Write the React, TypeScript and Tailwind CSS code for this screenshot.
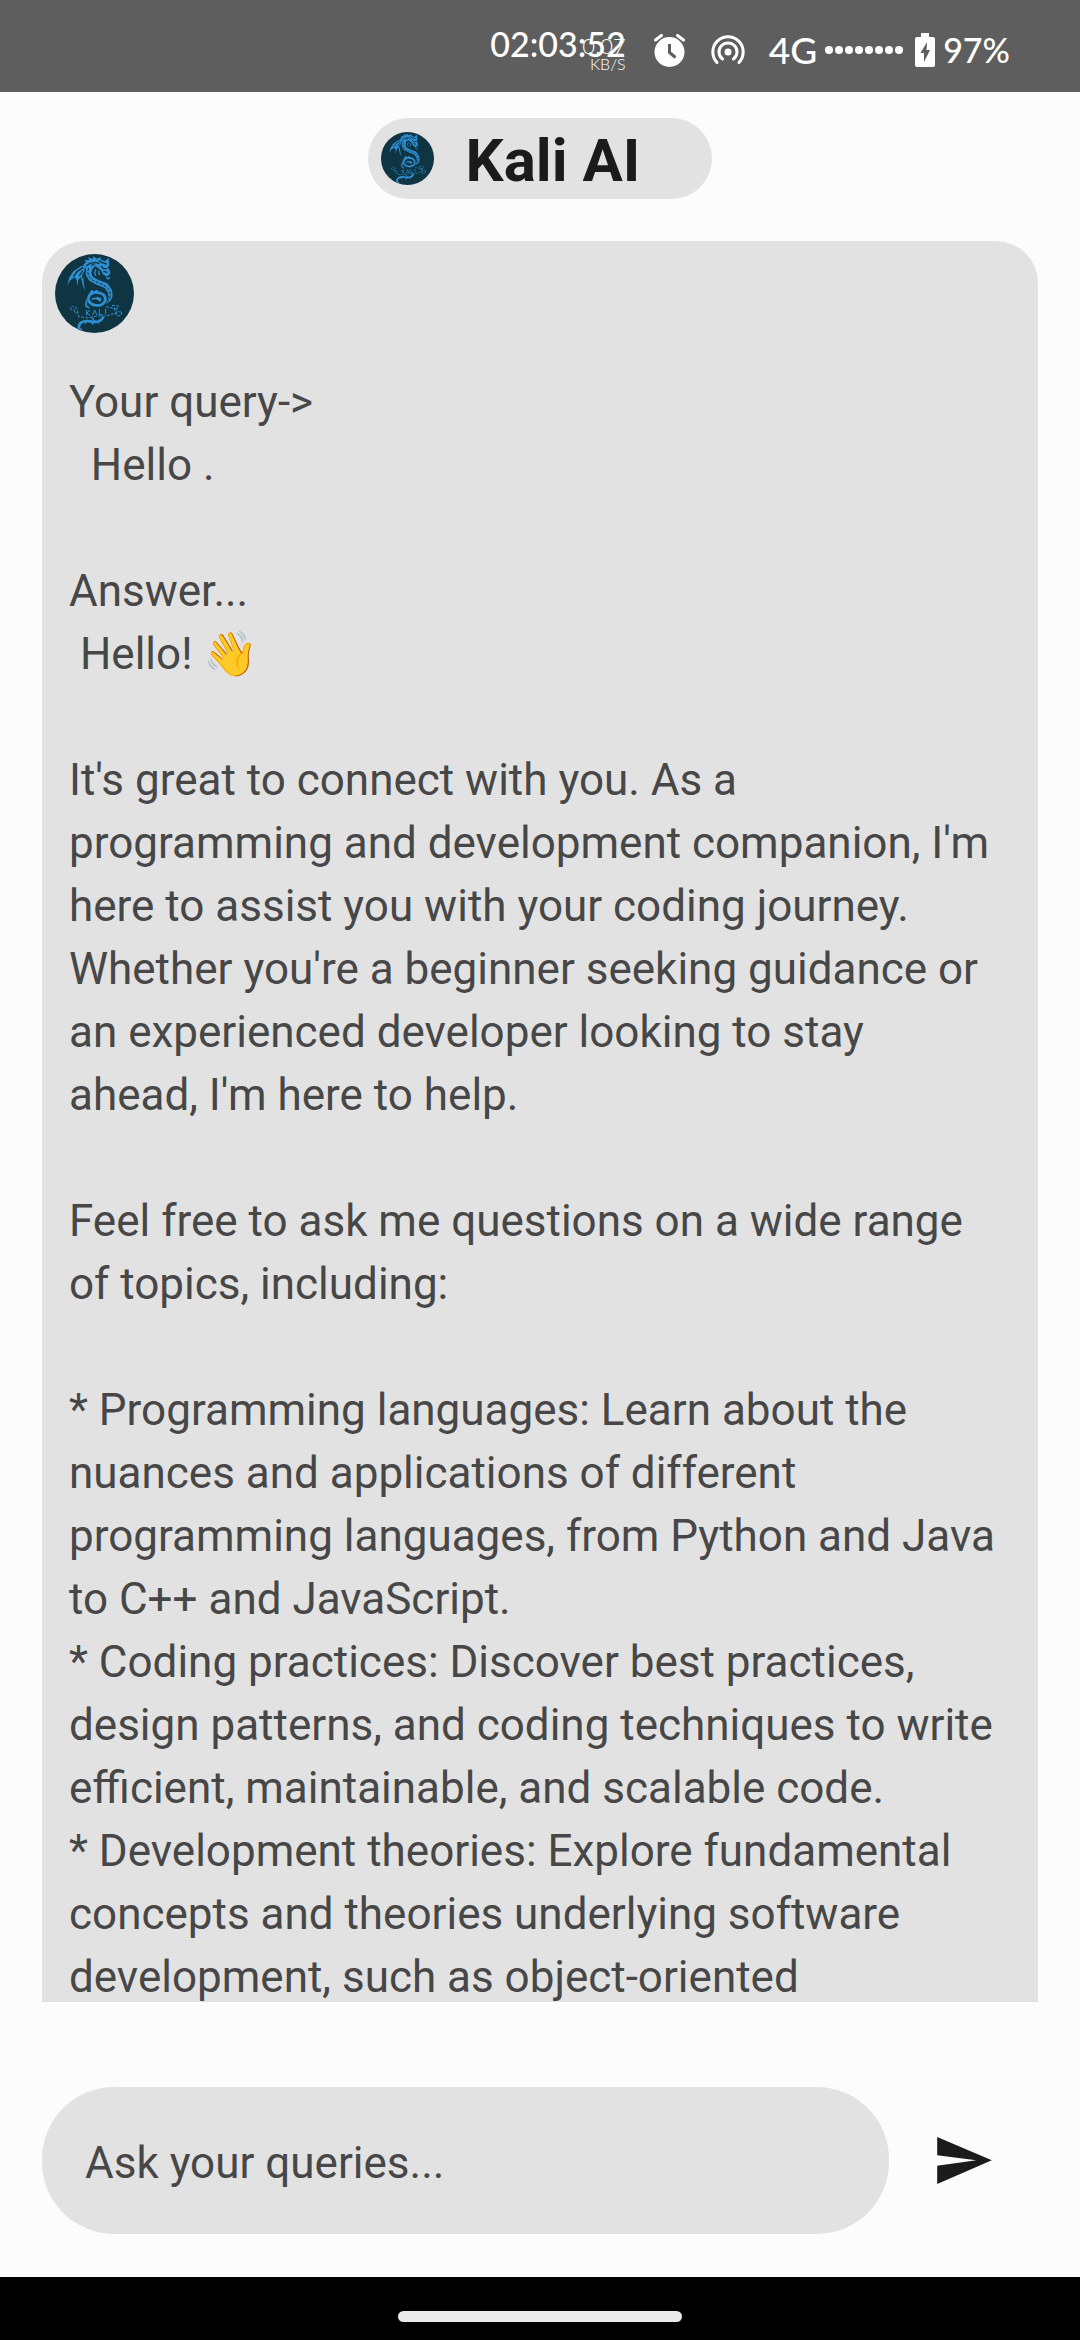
import { useState } from "react";

function DragonAvatar({ className }: { className: string }) {
  return (
    <svg viewBox="75 72 237 237" className={className} role="img" aria-label="Kali dragon">
      <circle cx="193.5" cy="190.5" r="118.5" fill="#0f3442" />
      <path d="M166 104 150 110 130 124 118 142 112 164 122 150 134 142 140 150 141 168 146 148 153 142 158 164 165 183 161 156 160 140 164 116z" fill="#2f8fd3" />
      <path d="M160 112 142 124 130 140M158 122 148 138M161 128 157 144" fill="none" stroke="#0f3442" strokeWidth="4" />
      <path d="M160 104 168 96 163 90 178 91 174 82 188 86 190 79 200 86 212 82 213 90 226 93 236 83 238 106 234 112 241 126 238 136 228 139 218 132 214 122 204 114 196 108 188 116 184 128 188 140 206 150 232 160 246 180 248 198 242 212 228 222 236 204 234 188 224 174 200 164 178 152 167 134 168 116z" fill="#2f8fd3" />
      <g fill="none" stroke="#0f3442" strokeLinejoin="round">
        <path d="M168 108 180 100 196 97 208 101M184 106 194 102M206 92 216 98 230 102M212 108 222 116 232 116M220 124 232 127" strokeWidth="4" />
        <path d="M176 114C170 130 176 144 190 152C212 162 234 166 240 186C242 196 240 206 234 214" strokeWidth="3" strokeDasharray="9 4" />
      </g>
      <g fill="none" stroke="#2f8fd3" strokeLinejoin="round">
        <path d="M198 118 194 128 197 137M206 122 208 136M228 140 234 147 240 142" strokeWidth="4" />
        <path d="M175 206C178 186 202 182 220 194C232 206 226 222 208 226C190 228 176 220 175 206z" strokeWidth="8" />
        <path d="M178 194l8-12 5 7 9-7 6 9M170 208l-2 20 10 6M186 208C194 202 206 206 212 214M200 202l14 6" strokeWidth="5" />
        <path d="M142 236 128 228 120 236 130 242 136 238M142 242 146 260 172 264 200 258 230 258 260 248 258 236 228 230M132 244l12 8M246 226l20 2-6 10 8 8 7-2-2 12-12 2-6-8M252 234l8 18" strokeWidth="3" strokeDasharray="9 4" />
        <path d="M170 240v16M180 240l-9 9 10 8M188 256l6-16 7 16M208 238v16h10M227 236v16" strokeWidth="3" />
        <path d="M148 298C142 278 160 270 180 274C198 278 214 274 220 260" strokeWidth="8" />
        <path d="M144 294l12 5M166 282l2-12M186 284l8-14M204 280l8-12M184 262l8 8" strokeWidth="4" />
      </g>
    </svg>
  );
}

function StatusBar() {
  return (
    <header className="flex h-[92px] shrink-0 items-center justify-end bg-[#5e5e5e] pt-2 pr-[70px] font-['Lato','Roboto',sans-serif] text-white">
      <div className="relative mr-7 pb-3">
        <time className="text-[34px] leading-10 font-medium">02:03:52</time>
        <div className="absolute top-3 right-0 text-right text-[22px] leading-5 font-light">
          0.07
          <div className="text-[16px] leading-4">KB/S</div>
        </div>
      </div>
      <svg viewBox="0 0 31 33" className="mr-[26px] h-[33px] w-[31px]" role="img" aria-label="Alarm">
        <circle cx="15.5" cy="18" r="15" fill="#fff" />
        <path d="M1.5 6 7.5 1.5M29.5 6 23.5 1.5" stroke="#fff" strokeWidth="3" strokeLinecap="round" />
        <path d="M15.5 10v8.5l6 5" fill="none" stroke="#5e5e5e" strokeWidth="3" />
      </svg>
      <svg viewBox="0 0 34 30" className="mr-6 h-[30px] w-[34px]" role="img" aria-label="Hotspot">
        <circle cx="17" cy="17" r="3.5" fill="#fff" />
        <path d="M11.5 24a9 9 0 1 1 11 0M6 27.500a15.200 15.200 0 1 1 22 0" fill="none" stroke="#fff" strokeWidth="3" strokeLinecap="round" />
      </svg>
      <span className="mr-2 text-[37px] leading-10 font-medium">4G</span>
      <svg viewBox="0 0 78 8" className="mr-3 h-2 w-[78px]" role="img" aria-label="Signal" fill="#fff">
        {[4, 14, 24, 34, 44, 54, 64, 74].map((x) => (
          <circle key={x} cx={x} cy="4" r="4" />
        ))}
      </svg>
      <svg viewBox="0 0 20 34" className="mr-2 h-[34px] w-5" role="img" aria-label="Charging">
        <path d="M6 0h8v4h4a2 2 0 0 1 2 2v26a2 2 0 0 1-2 2H2a2 2 0 0 1-2-2V6a2 2 0 0 1 2-2h4z" fill="#fff" />
        <path d="M12 9 5.500 20H9v9l6-12h-3.500z" fill="#5e5e5e" />
      </svg>
      <span className="text-[34px] leading-10 font-medium">97%</span>
    </header>
  );
}

const message = `Your query->
  Hello .

Answer...
 Hello! 👋

It's great to connect with you. As a programming and development companion, I'm here to assist you with your coding journey. Whether you're a beginner seeking guidance or an experienced developer looking to stay ahead, I'm here to help.

Feel free to ask me questions on a wide range of topics, including:

* Programming languages: Learn about the nuances and applications of different programming languages, from Python and Java to C++ and JavaScript.
* Coding practices: Discover best practices, design patterns, and coding techniques to write efficient, maintainable, and scalable code.
* Development theories: Explore fundamental concepts and theories underlying software development, such as object-oriented`;

export default function App() {
  const [query, setQuery] = useState("");
  return (
    <div className="flex h-dvh flex-col bg-[#fcfcfc] font-['Roboto',sans-serif] text-[#474747]">
      <StatusBar />
      <div className="mt-[26px] flex h-[81px] shrink-0 items-center self-center rounded-full bg-[#e2e2e2] pr-[72px] pl-[13px]">
        <DragonAvatar className="size-[53px]" />
        <h1 className="ml-8 pt-1 text-[60px] leading-[80px] font-bold text-[#1b1b1b]">Kali AI</h1>
      </div>
      <main className="mx-[42px] mt-[42px] min-h-0 flex-1 overflow-hidden rounded-t-[42px] bg-[#e2e2e2] pt-[13px]">
        <DragonAvatar className="ml-[13px] size-[79px]" />
        <p className="mt-[38px] pr-10 pl-[27px] text-[44px] leading-[63px] whitespace-pre-wrap">{message}</p>
      </main>
      <form className="mx-[42px] mt-[85px] mb-[43px] flex shrink-0 items-center" onSubmit={(e) => e.preventDefault()}>
        <input
          aria-label="Ask your queries"
          placeholder="Ask your queries..."
          value={query}
          onChange={(e) => setQuery(e.target.value)}
          className="h-[147px] min-w-0 flex-1 rounded-[72px] bg-[#e2e2e2] px-[43px] pt-1 text-[44px] outline-none placeholder:text-[#474747] placeholder:opacity-100"
        />
        <button type="submit" aria-label="Send" className="mr-[21px] flex h-[126px] w-[128px] items-center justify-center pl-[22px]">
          <svg viewBox="0 0 165 142" className="h-[47px] w-[55px]" fill="#1b1b1b">
            <path d="M0 0 165 70.500 0 142V87L118 70.500 0 55z" />
          </svg>
        </button>
      </form>
      <footer className="flex h-[63px] shrink-0 justify-center bg-black pt-[34px]">
        <div className="h-[11px] w-[284px] rounded-full bg-[#ebebeb]" />
      </footer>
    </div>
  );
}
